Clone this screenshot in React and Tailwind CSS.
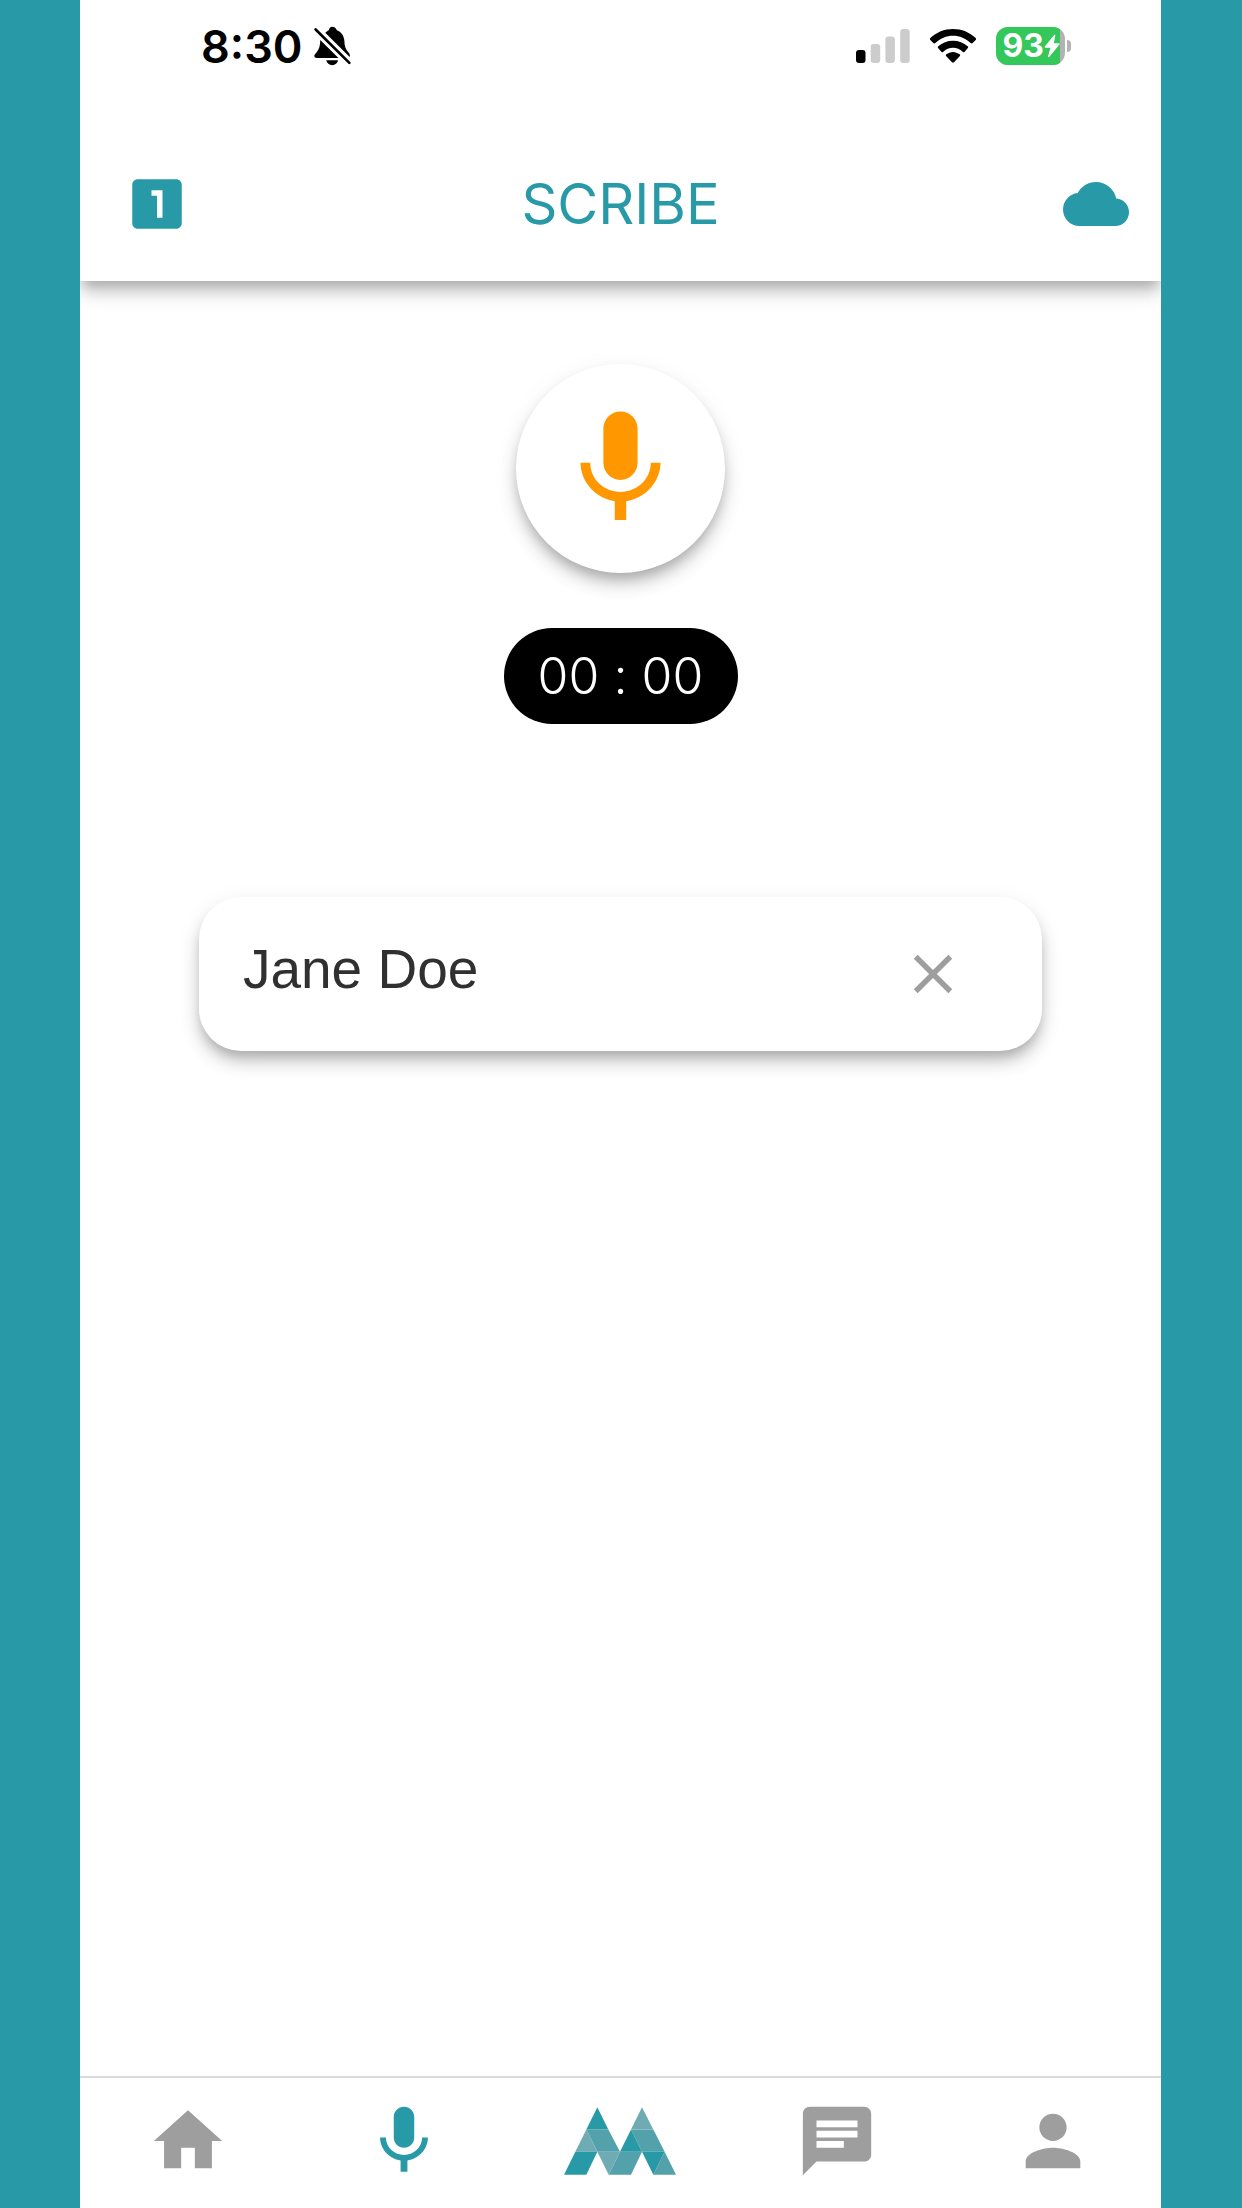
import { useState } from "react";
import { MdChat, MdClose, MdCloud, MdHome, MdLooksOne, MdPerson } from "react-icons/md";

const elevation =
  "shadow-[0_8px_12px_-3px_rgba(0,0,0,0.2),0_12px_18px_0_rgba(0,0,0,0.14),0_6px_28px_0_rgba(0,0,0,0.06)]";

function MicIcon({ className }) {
  return (
    <svg viewBox="0 0 24 24" fill="currentColor" className={className} aria-hidden="true">
      <path d="M12 14c1.66 0 2.99-1.34 2.99-3L15 5c0-1.66-1.34-3-3-3S9 3.34 9 5v6c0 1.66 1.34 3 3 3zm5.3-3c0 3-2.54 5.1-5.3 5.1S6.7 14 6.7 11H5c0 3.41 2.72 6.23 6 6.72V21h2v-3.28c3.28-.48 6-3.3 6-6.72h-1.7z" />
    </svg>
  );
}

function LogoIcon({ className }) {
  return (
    <svg viewBox="0 0 336 203" className={className} aria-hidden="true">
      <g fill="#53a1aa">
        <path d="M67 67h66l35 67h-68z" />
        <path d="M168 134h66l-33 69h-67z" />
        <path d="M201 67h67l34 67h-68z" />
        <path d="M302 134l34 69h-68z" />
      </g>
      <g fill="#6fabb3">
        <path d="M67 67l33 67H34z" />
        <path d="M100 134h68l-34 69z" />
        <path d="M234 0l34 67h-67z" />
      </g>
      <g fill="#2899a7">
        <path d="M100 0l33 67H67z" />
        <path d="M34 134h66l-33 69H0z" />
        <path d="M201 67l33 67h-66z" />
        <path d="M234 134h68l-34 69z" />
      </g>
    </svg>
  );
}

function BellOffIcon() {
  return (
    <svg viewBox="0 0 112 120" className="h-10 w-[37px]" aria-hidden="true">
      <path d="M55 2c7 0 12 4 14 10 15 6 22 18 23 33 0 16 4 26 12 34 4 4 6 9 4 14L34 20c4-4 8-7 11-8 1-6 4-10 10-10z" />
      <path d="M19 42l55 54H8c-7 0-9-6-5-11 10-11 15-18 16-43z" />
      <path d="M37 103h36c-2 9-9 15-18 15s-16-6-18-15z" />
      <path d="M5 10l102 101" stroke="#000" strokeWidth="8" strokeLinecap="round" />
    </svg>
  );
}

function SignalIcon() {
  return (
    <svg viewBox="0 0 54 34" className="h-[34px] w-[54px]" aria-hidden="true">
      <rect x="0" y="21" width="9.5" height="13" rx="3" />
      <g fill="#ccc">
        <rect x="14.7" y="15" width="9.5" height="19" rx="3" />
        <rect x="29.4" y="7.5" width="9.5" height="26.5" rx="3" />
        <rect x="44.2" y="0" width="9.5" height="34" rx="3" />
      </g>
    </svg>
  );
}

function WifiIcon() {
  return (
    <svg viewBox="0 0 138 102" className="h-[34px] w-[46px]" aria-hidden="true">
      <path d="M69 0c26 0 50 10 68 27 2 2 2 4 0 6l-9 9c-2 2-4 2-6 0C108 28 89 20 69 20S30 28 16 42c-2 2-4 2-6 0l-9-9c-2-2-2-4 0-6C19 10 43 0 69 0z" />
      <path d="M69 35c17 0 32 6 44 17 2 2 2 4 0 6l-9 10c-2 2-4 2-6 0-8-8-18-12-29-12s-21 4-29 12c-2 2-4 2-6 0L25 58c-2-2-2-4 0-6 12-11 27-17 44-17z" />
      <path d="M69 69c7 0 14 3 20 7 2 2 2 4 0 6L72 100c-2 2-4 2-6 0L49 82c-2-2-2-4 0-6 6-4 13-7 20-7z" />
    </svg>
  );
}

function Battery() {
  return (
    <div className="flex items-center gap-0.5">
      <div className="flex h-[38px] w-[69px] overflow-hidden rounded-xl bg-[#b3b3b3] pr-[5px]">
        <div className="flex flex-1 items-center justify-end bg-[#34c759] text-white">
          <span className="text-[32px] leading-none font-bold">93</span>
          <svg viewBox="0 0 48 70" className="h-6 w-4" fill="currentColor" aria-hidden="true">
            <path
              d="M32 3L4 38h18l-8 29 31-38H27z"
              stroke="currentColor"
              strokeWidth="4"
              strokeLinejoin="round"
            />
          </svg>
        </div>
      </div>
      <div className="h-3 w-1 rounded-r-full bg-[#b3b3b3]" />
    </div>
  );
}

const tabs = [
  { label: "Home", icon: MdHome },
  { label: "Scribe", icon: MicIcon, active: true },
  { label: "Dashboard", icon: LogoIcon, logo: true },
  { label: "Messages", icon: MdChat },
  { label: "Profile", icon: MdPerson },
];

export default function App() {
  const [patient, setPatient] = useState("Jane Doe");

  return (
    <div className="min-h-screen bg-[#2899a7] pr-[81px] pl-20 font-['Inter',sans-serif]">
      <div className="flex min-h-screen flex-col overflow-hidden bg-white">
        <header className={`bg-white ${elevation}`}>
          <div className="flex h-[127px] items-start justify-between pt-[22px] pr-[90px] pl-[121px]">
            <div className="flex h-12 items-center gap-3">
              <span className="text-[45px] leading-none font-semibold">8:30</span>
              <BellOffIcon />
            </div>
            <div className="flex h-12 items-center gap-5">
              <SignalIcon />
              <WifiIcon />
              <Battery />
            </div>
          </div>

          <div className="grid h-[154px] grid-cols-[1fr_auto_1fr] items-center pr-8 pl-8 text-[#2899a7]">
            <button type="button" aria-label="Queue" className="justify-self-start pl-3">
              <MdLooksOne className="size-[66px]" />
            </button>
            <h1 className="text-[56px] leading-none">SCRIBE</h1>
            <button type="button" aria-label="Cloud sync" className="justify-self-end">
              <MdCloud className="size-[66px]" />
            </button>
          </div>
        </header>

        <main className="flex flex-1 flex-col items-center pt-[83px]">
          <button
            type="button"
            aria-label="Start recording"
            className={`flex size-[209px] items-center justify-center rounded-full bg-white text-[#ff9800] ${elevation}`}
          >
            <MicIcon className="size-[137px]" />
          </button>

          <div className="mt-[55px] flex h-24 w-[234px] items-center justify-center rounded-full bg-black text-[50px] leading-none font-light text-white [font-feature-settings:'calt'_0]">
            00 : 00
          </div>

          <div
            className={`mt-[173px] flex h-[154px] w-[78%] items-center rounded-[42px] bg-white pr-[76px] pl-11 ${elevation}`}
          >
            <input
              type="text"
              aria-label="Patient name"
              value={patient}
              onChange={(e) => setPatient(e.target.value)}
              className="min-w-0 flex-1 pb-2.5 font-['Liberation_Sans',sans-serif] text-[55px] text-[#303030] outline-none"
            />
            <button type="button" aria-label="Clear" onClick={() => setPatient("")} className="text-[#9e9e9e]">
              <MdClose className="size-[66px]" />
            </button>
          </div>
        </main>

        <nav className="grid grid-cols-5 border-t-2 border-[#dadada] pt-[22px] pb-[26px]">
          {tabs.map(({ label, icon: Icon, active, logo }) => (
            <a
              key={label}
              href={`#${label.toLowerCase()}`}
              aria-label={label}
              className={`flex h-[82px] items-center justify-center ${active ? "text-[#2899a7]" : "text-[#9e9e9e]"}`}
            >
              <Icon className={logo ? "h-[68px] w-28" : "size-[82px]"} />
            </a>
          ))}
        </nav>
      </div>
    </div>
  );
}
